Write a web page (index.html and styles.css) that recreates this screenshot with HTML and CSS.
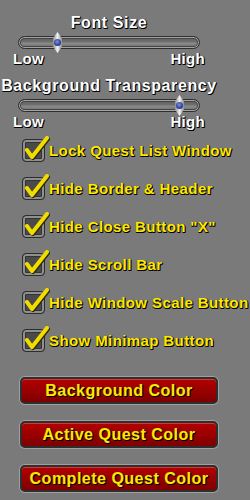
FILE: index.html
```html
<!DOCTYPE html>
<html lang="en">
<head>
  <meta charset="UTF-8">
  <title>Quest List Options</title>
  <link rel="stylesheet" href="styles.css">
</head>
<body>
<div class="panel">

  <div class="slider-group">
    <div class="slider-title">Font Size</div>
    <div class="track">
      <span class="thumb" style="left: 38px"></span>
    </div>
    <div class="slider-labels"><span>Low</span><span>High</span></div>
  </div>

  <div class="slider-group second">
    <div class="slider-title">Background Transparency</div>
    <div class="track">
      <span class="thumb" style="left: 160px"></span>
    </div>
    <div class="slider-labels"><span>Low</span><span>High</span></div>
  </div>

  <div class="options">
    <label class="option">
      <span class="box"><svg class="check" viewBox="0 0 28 28"><path d="M5 15 L10 22 L25 3"/></svg></span>
      <span class="option-text">Lock Quest List Window</span>
    </label>
    <label class="option">
      <span class="box"><svg class="check" viewBox="0 0 28 28"><path d="M5 15 L10 22 L25 3"/></svg></span>
      <span class="option-text">Hide Border &amp; Header</span>
    </label>
    <label class="option">
      <span class="box"><svg class="check" viewBox="0 0 28 28"><path d="M5 15 L10 22 L25 3"/></svg></span>
      <span class="option-text">Hide Close Button "X"</span>
    </label>
    <label class="option">
      <span class="box"><svg class="check" viewBox="0 0 28 28"><path d="M5 15 L10 22 L25 3"/></svg></span>
      <span class="option-text">Hide Scroll Bar</span>
    </label>
    <label class="option">
      <span class="box"><svg class="check" viewBox="0 0 28 28"><path d="M5 15 L10 22 L25 3"/></svg></span>
      <span class="option-text">Hide Window Scale Button</span>
    </label>
    <label class="option">
      <span class="box"><svg class="check" viewBox="0 0 28 28"><path d="M5 15 L10 22 L25 3"/></svg></span>
      <span class="option-text">Show Minimap Button</span>
    </label>
  </div>

  <div class="buttons">
    <button class="red-btn">Background Color</button>
    <button class="red-btn">Active Quest Color</button>
    <button class="red-btn">Complete Quest Color</button>
  </div>

</div>
</body>
</html>
```

FILE: styles.css
```css
body {
  margin: 0;
  background-color: #7a7a7a;
  font-family: "Liberation Sans", Arial, sans-serif;
  font-weight: bold;
  overflow: hidden;
}

.panel {
  width: 250px;
  height: 500px;
  padding-top: 14px;
  box-sizing: border-box;
}

.slider-group {
  margin-left: 13px;
  width: 192px;
}

.slider-group.second {
  margin-top: 9px;
}

.slider-title {
  font-size: 16px;
  line-height: 18px;
  letter-spacing: 0.6px;
  color: #fff;
  text-align: center;
  white-space: nowrap;
  margin: 0 -20px;
  text-shadow: 1px 1px 0 #000, 0 1px 0 #111, 1px 0 0 #333;
}

.track {
  position: relative;
  height: 13px;
  margin: 4px 5px 0;
  box-sizing: border-box;
  border: 1px solid #2f2f2f;
  border-radius: 7px;
  background: linear-gradient(#5e5e5e, #6f6f6f 45%, #8c8c8c 55%, #6a6a6a);
  box-shadow: inset 0 0 0 1px #a3a3a3, inset 0 0 0 2px #444;
}

.thumb {
  position: absolute;
  top: -5px;
  width: 9px;
  height: 21px;
  margin-left: -4px;
  background: linear-gradient(90deg, #8a8a8a, #f2f2f2 50%, #8a8a8a);
  clip-path: polygon(50% 0, 100% 30%, 100% 70%, 50% 100%, 0 70%, 0 30%);
}

.thumb::after {
  content: "";
  position: absolute;
  left: 1px;
  top: 7px;
  width: 7px;
  height: 7px;
  border-radius: 50%;
  background: radial-gradient(circle at 45% 40%, #7c8fe0, #24318a 70%);
}

.slider-labels {
  display: flex;
  justify-content: space-between;
  margin-top: 1px;
  font-size: 15px;
  line-height: 18px;
  letter-spacing: 0.3px;
  color: #fff;
  text-shadow: 1px 1px 0 #000, 0 1px 0 #111, 1px 0 0 #333;
}

.option {
  display: flex;
  align-items: center;
  height: 38px;
  padding-left: 22px;
}

.box {
  position: relative;
  flex: none;
  width: 23px;
  height: 23px;
  box-sizing: border-box;
  border: 1px solid #2c2c2c;
  border-radius: 4px;
  background-color: #4a4a4a;
  box-shadow: inset 0 0 0 2px #8f8f8f, inset 0 0 0 3px #333;
}

.check {
  position: absolute;
  left: -1px;
  top: -5px;
  width: 28px;
  height: 28px;
  fill: none;
}

.check path {
  stroke: #f2dc00;
  stroke-width: 4;
  stroke-linecap: round;
  stroke-linejoin: round;
  filter: drop-shadow(1px 1px 0 #2a2a00);
}

.option-text {
  margin-left: 4px;
  font-size: 15px;
  letter-spacing: 0.4px;
  color: #ffe800;
  white-space: nowrap;
  text-shadow: 1px 1px 0 #000, 0 1px 0 #111, 1px 0 0 #333;
}

.buttons {
  display: flex;
  flex-direction: column;
  gap: 17px;
  margin-top: 18px;
  padding-left: 20px;
}

.red-btn {
  width: 198px;
  height: 27px;
  padding: 0;
  border: 2px solid #2e2e2e;
  border-radius: 5px;
  background: linear-gradient(#b40000, #9a0000 50%, #7e0000);
  box-shadow: 0 0 0 1px #a0a0a0, inset 0 1px 0 #d23a3a;
  font-family: "Liberation Sans", Arial, sans-serif;
  font-weight: bold;
  font-size: 16px;
  letter-spacing: 0.5px;
  color: #ffe800;
  white-space: nowrap;
  text-shadow: 1px 1px 0 #000, 0 1px 0 #111, 1px 0 0 #333;
}
```
